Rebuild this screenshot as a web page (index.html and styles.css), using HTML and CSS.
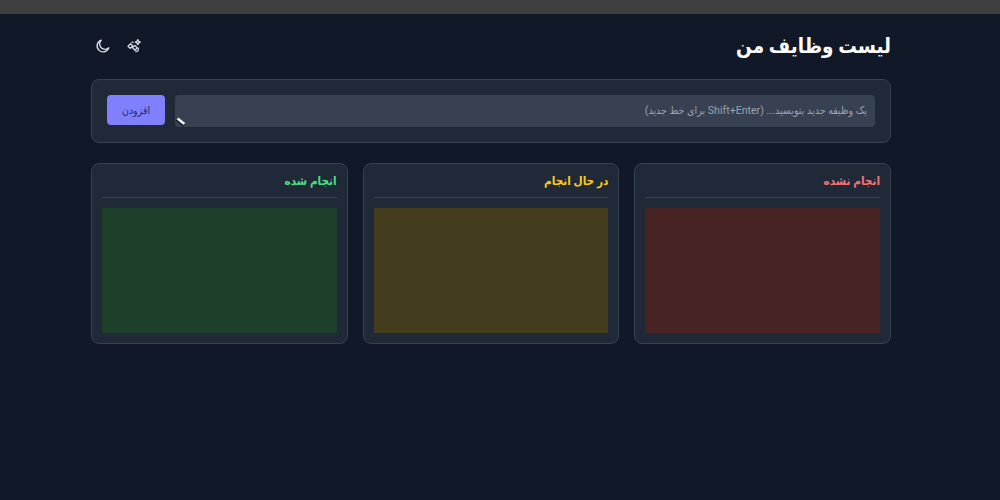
FILE: index.html
```html
<!DOCTYPE html>
<html lang="fa" dir="rtl">
<head>
    <meta charset="UTF-8">
    <meta name="viewport" content="width=device-width, initial-scale=1.0">
    <title>لیست وظایف من</title>
    <link rel="stylesheet" href="styles.css">
</head>
<body>
    <div class="top-strip"></div>
    <div class="page">
        <header class="page-header">
            <h1>لیست وظایف من</h1>
            <div class="header-icons">
                <button class="icon-button" type="button" aria-label="effects">
                    <svg viewBox="0 0 16 16" width="16" height="16" fill="none" stroke="currentColor" stroke-width="1.3" stroke-linejoin="round">
                        <path d="M2 8.2l2.6-2.4 2 2-2.4 2.6z"/>
                        <path d="M6.4 9.6l2.4-2.2 2.4 2.4-2.2 2.4z"/>
                        <path d="M11.8 1.6l.8 1.7 1.7.8-1.7.8-.8 1.7-.8-1.7-1.7-.8 1.7-.8z"/>
                        <path d="M5.5 4.2l2 .2M12.6 9.6l-.8 3.4-2.4.8"/>
                    </svg>
                </button>
                <button class="icon-button" type="button" aria-label="theme">
                    <svg viewBox="0 0 16 16" width="16" height="16" fill="none" stroke="currentColor" stroke-width="1.4" stroke-linecap="round" stroke-linejoin="round">
                        <path d="M6.2 2.2a6 6 0 1 0 7.6 7.6A5.2 5.2 0 0 1 6.2 2.2z"/>
                    </svg>
                </button>
            </div>
        </header>

        <form class="add-form">
            <textarea class="task-input" placeholder="یک وظیفه جدید بنویسید... (Shift+Enter برای خط جدید)"></textarea>
            <button class="add-button" type="button">افزودن</button>
        </form>

        <div class="board">
            <section class="column">
                <h2 class="column-title title-todo">انجام نشده</h2>
                <div class="drop-zone zone-todo"></div>
            </section>
            <section class="column">
                <h2 class="column-title title-doing">در حال انجام</h2>
                <div class="drop-zone zone-doing"></div>
            </section>
            <section class="column">
                <h2 class="column-title title-done">انجام شده</h2>
                <div class="drop-zone zone-done"></div>
            </section>
        </div>
    </div>
</body>
</html>
```

FILE: styles.css
```css
* {
    box-sizing: border-box;
}

html, body {
    height: 100%;
}

body {
    margin: 0;
    background-color: #111827;
    color: #ffffff;
    font-family: Roboto, "DejaVu Sans Condensed", "DejaVu Sans", sans-serif;
    font-stretch: condensed;
    overflow: hidden;
}

.top-strip {
    height: 14px;
    background-color: #3f3f3f;
}

.page {
    width: 800px;
    margin-left: 91px;
    margin-right: 109px;
}

.page-header {
    display: flex;
    justify-content: space-between;
    align-items: center;
    height: 65px;
    padding-bottom: 2px;
}

.page-header h1 {
    margin: 0;
    font-size: 20.5px;
    font-weight: 700;
}

.header-icons {
    display: flex;
    align-items: center;
    gap: 15px;
    padding-left: 4px;
}

.icon-button {
    display: flex;
    padding: 0;
    background: none;
    border: none;
    color: #d6dbe6;
}

.add-form {
    display: flex;
    gap: 10px;
    height: 64px;
    padding: 15px;
    background-color: #1f2937;
    border: 1px solid #374151;
    border-radius: 8px;
}

.task-input {
    flex: 1;
    height: 32px;
    padding: 9px 8px;
    background-color: #374151;
    color: #ffffff;
    border: none;
    border-radius: 4px;
    font-family: inherit;
    font-size: 10.6px;
    line-height: 14px;
    outline: none;
}

.task-input::placeholder {
    color: #9ca3af;
}

.task-input::-webkit-resizer {
    background: url("data:image/svg+xml,%3Csvg xmlns='http://www.w3.org/2000/svg' width='15' height='15'%3E%3Cpath d='M2 7 9.5 13' stroke='%23111827' stroke-width='4'/%3E%3Cpath d='M2.5 6.5 9.5 12' stroke='%23f3f4f6' stroke-width='2.6'/%3E%3C/svg%3E") no-repeat;
}

.add-button {
    width: 58px;
    height: 30px;
    background-color: #8080ff;
    color: #1f2a5c;
    border: none;
    border-radius: 4px;
    font-family: inherit;
    font-size: 10.5px;
    font-weight: 500;
}

.board {
    display: grid;
    grid-template-columns: repeat(3, 1fr);
    gap: 15px;
    margin-top: 20px;
}

.column {
    height: 181px;
    padding: 10px;
    background-color: #1f2937;
    border: 1px solid #374151;
    border-radius: 8px;
}

.column-title {
    margin: 0 0 10px;
    height: 24px;
    font-size: 11.7px;
    font-weight: 700;
    line-height: 14px;
    border-bottom: 1px solid #374151;
}

.title-todo { color: #f87171; }
.title-doing { color: #facc15; }
.title-done { color: #4ade80; }

.drop-zone {
    height: 125px;
}

.zone-todo { background-color: #482323; }
.zone-doing { background-color: #443d1d; }
.zone-done { background-color: #1e402a; }
```
